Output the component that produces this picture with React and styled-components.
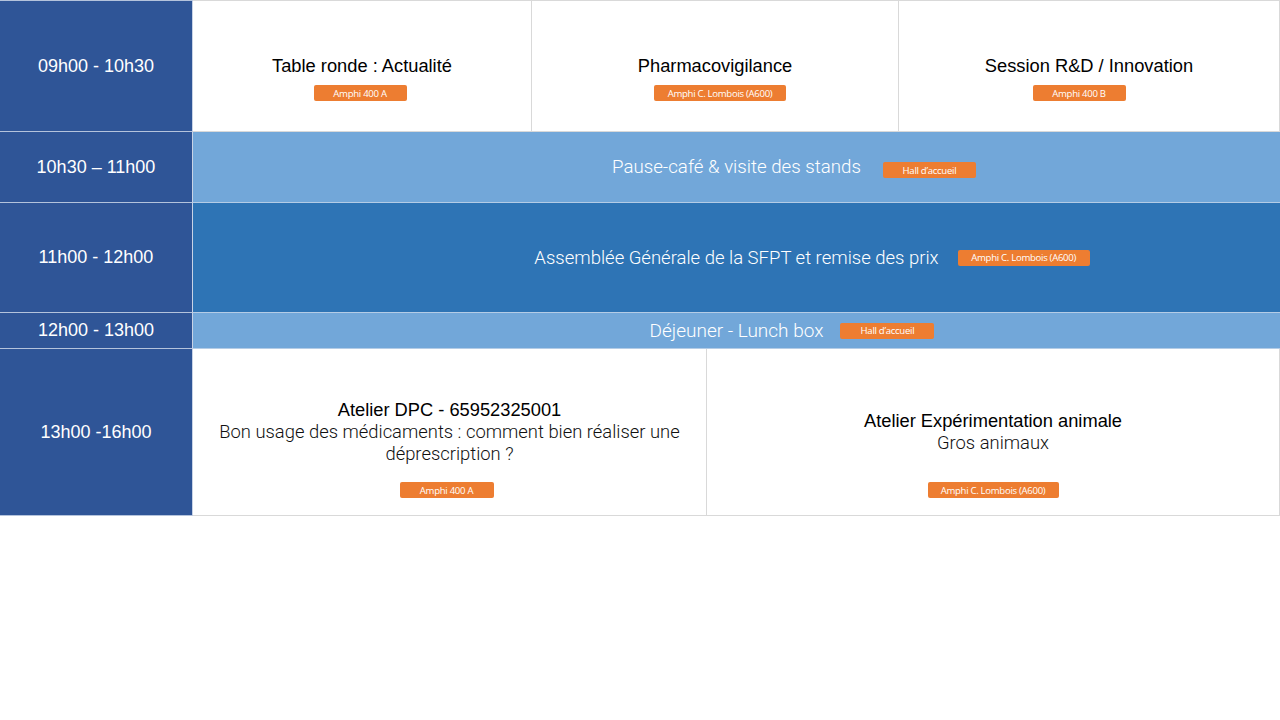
import React from 'react';
import styled, { createGlobalStyle } from 'styled-components';

const GlobalStyle = createGlobalStyle`
  html, body {
    margin: 0;
    padding: 0;
    background: #ffffff;
  }
  * {
    box-sizing: border-box;
  }
`;

const Page = styled.div`
  width: 1280px;
  height: 720px;
  background: #ffffff;
  font-family: "Liberation Sans", Arial, sans-serif;
`;

const Schedule = styled.div`
  display: flex;
  flex-direction: column;
  width: 1280px;
`;

const Row = styled.div`
  display: flex;
  height: ${props => props.h}px;
`;

const TimeCell = styled.div`
  width: 193px;
  flex: none;
  display: flex;
  align-items: center;
  justify-content: center;
  background: #2f5597;
  color: #ffffff;
  font-size: 18px;
  border-bottom: 1px solid #b4c3dc;
  border-right: 1px solid #c8d3e6;
  border-top: ${props => (props.first ? '1px solid #b4c3dc' : 'none')};
`;

const SessionCell = styled.div`
  width: ${props => props.w}px;
  flex: none;
  display: grid;
  grid-template-rows: 1fr auto 1fr;
  justify-items: center;
  background: #ffffff;
  border-right: 1px solid #d9d9d9;
  border-bottom: 1px solid #d9d9d9;
  border-top: ${props => (props.first ? '1px solid #d9d9d9' : 'none')};
  text-align: center;
`;

const SessionText = styled.div`
  grid-row: 2;
  display: flex;
  flex-direction: column;
  align-items: center;
  padding: 0 20px;
`;

const Title = styled.div`
  font-size: 18.3px;
  color: #000000;
  line-height: 22px;
`;

const Subtitle = styled.div`
  font-family: Roboto, "Liberation Sans", sans-serif;
  font-weight: 300;
  font-size: 18.4px;
  color: #111111;
  line-height: 22px;
`;

const BadgeSlot = styled.div`
  grid-row: 3;
  align-self: ${props => (props.bottom ? 'end' : 'start')};
  margin-top: ${props => (props.bottom ? 0 : 8)}px;
  margin-bottom: ${props => (props.bottom ? 17 : 0)}px;
  margin-left: ${props => (props.dx || 0) * 2}px;
`;

const Badge = styled.div`
  width: ${props => props.w}px;
  height: 16px;
  display: flex;
  align-items: center;
  justify-content: center;
  background: #ed7d31;
  border-radius: 2px;
  color: #ffffff;
  font-family: "Open Sans", Lato, sans-serif;
  font-size: 9.6px;
  letter-spacing: -0.3px;
  white-space: nowrap;
`;

const BandCell = styled.div`
  flex: 1;
  display: grid;
  grid-template-columns: 1fr auto 1fr;
  align-items: center;
  background: ${props => props.bg};
  border-bottom: 1px solid #b4cce6;
`;

const BandText = styled.div`
  grid-column: 2;
  font-family: Roboto, "Liberation Sans", sans-serif;
  font-weight: 300;
  font-size: ${props => props.size || 18.5}px;
  color: #ffffff;
  white-space: nowrap;
`;

const BandBadge = styled.div`
  grid-column: 3;
  justify-self: start;
  margin-left: ${props => props.gap}px;
  margin-top: ${props => props.dy || 0}px;
`;

const LIGHT = '#72a7d9';
const MID = '#2e74b5';

export default function App() {
  return (
    <Page>
      <GlobalStyle />
      <Schedule>
        <Row h={132}>
          <TimeCell first>09h00 - 10h30</TimeCell>
          <SessionCell w={339} first>
            <SessionText><Title>Table ronde : Actualité</Title></SessionText>
            <BadgeSlot dx={-2}><Badge w={93}>Amphi 400 A</Badge></BadgeSlot>
          </SessionCell>
          <SessionCell w={367} first>
            <SessionText><Title>Pharmacovigilance</Title></SessionText>
            <BadgeSlot dx={5}><Badge w={132}>Amphi C. Lombois (A600)</Badge></BadgeSlot>
          </SessionCell>
          <SessionCell w={381} first>
            <SessionText><Title>Session R&amp;D / Innovation</Title></SessionText>
            <BadgeSlot dx={-10}><Badge w={93}>Amphi 400 B</Badge></BadgeSlot>
          </SessionCell>
        </Row>

        <Row h={71}>
          <TimeCell>10h30 – 11h00</TimeCell>
          <BandCell bg={LIGHT}>
            <BandText size={18.7}>Pause-café &amp; visite des stands</BandText>
            <BandBadge gap={22} dy={6}><Badge w={93}>Hall d’accueil</Badge></BandBadge>
          </BandCell>
        </Row>

        <Row h={110}>
          <TimeCell>11h00 - 12h00</TimeCell>
          <BandCell bg={MID}>
            <BandText size={18.5}>Assemblée Générale de la SFPT et remise des prix</BandText>
            <BandBadge gap={19}><Badge w={132}>Amphi C. Lombois (A600)</Badge></BandBadge>
          </BandCell>
        </Row>

        <Row h={36}>
          <TimeCell>12h00 - 13h00</TimeCell>
          <BandCell bg={LIGHT}>
            <BandText size={19}>Déjeuner - Lunch box</BandText>
            <BandBadge gap={17}><Badge w={94}>Hall d’accueil</Badge></BandBadge>
          </BandCell>
        </Row>

        <Row h={167}>
          <TimeCell>13h00 -16h00</TimeCell>
          <SessionCell w={514}>
            <SessionText>
              <Title>Atelier DPC - 65952325001</Title>
              <Subtitle>Bon usage des médicaments : comment bien réaliser une<br />déprescription ?</Subtitle>
            </SessionText>
            <BadgeSlot bottom dx={-3}><Badge w={94}>Amphi 400 A</Badge></BadgeSlot>
          </SessionCell>
          <SessionCell w={573}>
            <SessionText>
              <Title>Atelier Expérimentation animale</Title>
              <Subtitle>Gros animaux</Subtitle>
            </SessionText>
            <BadgeSlot bottom><Badge w={131}>Amphi C. Lombois (A600)</Badge></BadgeSlot>
          </SessionCell>
        </Row>
      </Schedule>
    </Page>
  );
}
